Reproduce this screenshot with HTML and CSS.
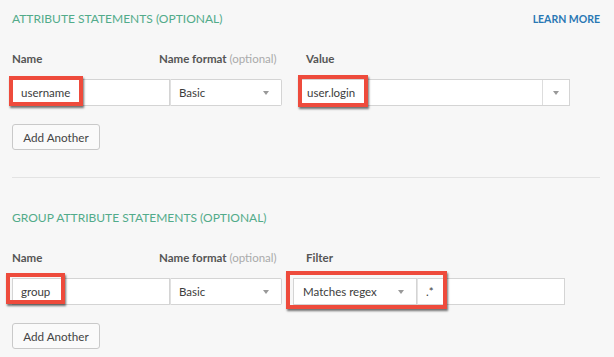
FILE: index.html
```html
<!DOCTYPE html>
<html lang="en">
<head>
    <meta charset="UTF-8">
    <meta name="viewport" content="width=device-width, initial-scale=1.0">
    <title>Attribute Statements</title>
    <link rel="stylesheet" href="styles.css">
</head>
<body>
    <div class="panel">
        <section class="section">
            <div class="section-head">
                <h2 class="section-title">Attribute Statements (optional)</h2>
                <a class="learn-more" href="#">Learn more</a>
            </div>
            <div class="label-row">
                <span class="label label-name">Name</span>
                <span class="label label-format">Name format <span class="hint">(optional)</span></span>
                <span class="label">Value</span>
            </div>
            <div class="field-row">
                <div class="text-input name-input">
                    <span class="value">username</span>
                    <span class="mark mark-username"></span>
                </div>
                <div class="select format-select">
                    <span class="value">Basic</span>
                    <span class="caret"></span>
                </div>
                <div class="combo value-combo">
                    <span class="value">user.login</span>
                    <span class="combo-toggle"><span class="caret"></span></span>
                    <span class="mark mark-value"></span>
                </div>
            </div>
            <button class="btn">Add Another</button>
        </section>

        <section class="section section-group">
            <h2 class="section-title">Group Attribute Statements (optional)</h2>
            <div class="label-row">
                <span class="label label-name">Name</span>
                <span class="label label-format">Name format <span class="hint">(optional)</span></span>
                <span class="label">Filter</span>
            </div>
            <div class="field-row">
                <div class="text-input name-input">
                    <span class="value">group</span>
                    <span class="mark mark-group"></span>
                </div>
                <div class="select format-select">
                    <span class="value">Basic</span>
                    <span class="caret"></span>
                </div>
                <div class="filter">
                    <div class="select filter-select">
                        <span class="value">Matches regex</span>
                        <span class="caret"></span>
                    </div>
                    <div class="text-input regex-input">
                        <span class="value">.*</span>
                    </div>
                    <span class="mark mark-filter"></span>
                </div>
            </div>
            <button class="btn">Add Another</button>
        </section>
    </div>
</body>
</html>
```

FILE: styles.css
```css
body {
    margin: 0;
    background-color: #f7f7f7;
    font-family: "Lato", "Open Sans", sans-serif;
    color: #333;
}

.panel {
    padding: 12px 14px 0 12px;
}

.section {
    padding-bottom: 27px;
}

.section-group {
    border-top: 1px solid #e3e3e3;
    padding-top: 33px;
    padding-bottom: 4px;
}

.section-head {
    display: flex;
    justify-content: space-between;
    align-items: center;
}

.section-title {
    margin: 0;
    height: 14px;
    line-height: 14px;
    font-size: 12px;
    font-weight: normal;
    text-transform: uppercase;
    color: #52ab8a;
}

.learn-more {
    font-size: 10.5px;
    font-weight: bold;
    text-transform: uppercase;
    color: #2a78b4;
    text-decoration: none;
}

.label-row {
    display: flex;
    margin-top: 27px;
    height: 12px;
    line-height: 12px;
}

.label {
    font-size: 11.5px;
    font-weight: bold;
    color: #555;
    white-space: nowrap;
}

.label-name {
    width: 147px;
}

.label-format {
    width: 147px;
}

.hint {
    font-weight: normal;
    color: #aaa;
}

.field-row {
    display: flex;
    margin-top: 14px;
    height: 27px;
}

.text-input,
.select,
.combo {
    position: relative;
    box-sizing: border-box;
    height: 27px;
    display: flex;
    align-items: center;
    background-color: #fff;
    border: 1px solid #d4d4d4;
    font-size: 11.5px;
    color: #3c3c3c;
}

.name-input {
    width: 158px;
    padding-left: 8px;
}

.format-select {
    width: 112px;
    border-left-color: #e0e0e0;
    padding: 0 8px 0 8px;
    justify-content: space-between;
    border-radius: 0 2px 2px 0;
}

.value-combo {
    width: 270px;
    margin-left: 18px;
    padding-left: 6px;
    justify-content: space-between;
}

.combo-toggle {
    width: 26px;
    height: 100%;
    border-left: 1px solid #ddd;
    display: flex;
    align-items: center;
    justify-content: center;
}

.caret {
    width: 0;
    height: 0;
    border-left: 3px solid transparent;
    border-right: 3px solid transparent;
    border-top: 4px solid #999;
    margin-right: 4px;
}

.combo-toggle .caret {
    margin-right: 0;
}

.filter {
    position: relative;
    display: flex;
    margin-left: 11px;
}

.filter-select {
    width: 124px;
    padding: 0 8px 0 9px;
    justify-content: space-between;
}

.regex-input {
    width: 148px;
    border-left-color: #e4e4e4;
    padding-left: 8px;
}

.mark {
    position: absolute;
    box-sizing: border-box;
    border: 4px solid #ee4b3c;
    box-shadow: 1px 2px 2px rgba(0, 0, 0, 0.55);
}

.mark-username {
    left: -4px;
    top: -4px;
    width: 74px;
    height: 30px;
}

.mark-value {
    left: -3px;
    top: -5px;
    width: 70px;
    height: 32px;
}

.mark-group {
    left: -7px;
    top: -6px;
    width: 59px;
    height: 31px;
}

.mark-filter {
    left: -7px;
    top: -7px;
    width: 161px;
    height: 38px;
}

.btn {
    display: block;
    margin-top: 18px;
    height: 26px;
    width: 88px;
    padding: 0;
    background-color: #fafafa;
    border: 1px solid #c9c9c9;
    border-radius: 3px;
    font-family: inherit;
    font-size: 11.7px;
    color: #444;
}
```
